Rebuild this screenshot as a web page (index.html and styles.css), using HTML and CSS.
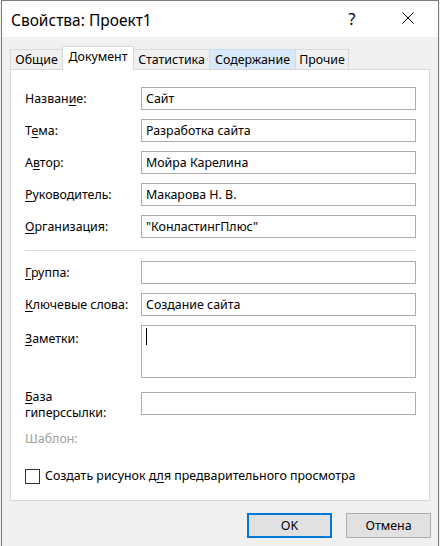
FILE: index.html
```html
<!DOCTYPE html>
<html lang="ru">
<head>
<meta charset="utf-8">
<title>Свойства: Проект1</title>
<link rel="stylesheet" href="styles.css">
</head>
<body>
<div class="window">
  <div class="titlebar">
    <span class="title">Свойства: Проект1</span>
    <span class="tb-btn help">?</span>
    <span class="tb-btn close">
      <svg width="12" height="12" viewBox="0 0 12 12"><path d="M0.5 0.5 L11.5 11.5 M11.5 0.5 L0.5 11.5" stroke="#000" stroke-width="1" fill="none"/></svg>
    </span>
  </div>
  <div class="content">
    <div class="tabs">
      <div class="tab t1">Общие</div>
      <div class="tab t2 active">Документ</div>
      <div class="tab t3">Статистика</div>
      <div class="tab t4 hover">Содержание</div>
      <div class="tab t5">Прочие</div>
    </div>
    <div class="panel">
      <div class="grid">
        <div class="lbl">Назван<u>и</u>е:</div><div class="field">Сайт</div>
        <div class="lbl">Т<u>е</u>ма:</div><div class="field">Разработка сайта</div>
        <div class="lbl">А<u>в</u>тор:</div><div class="field">Мойра Карелина</div>
        <div class="lbl"><u>Р</u>уководитель:</div><div class="field">Макарова Н. В.</div>
        <div class="lbl"><u>О</u>рганизация:</div><div class="field">"КонластингПлюс"</div>
      </div>
      <div class="sep"></div>
      <div class="grid">
        <div class="lbl"><u>Г</u>руппа:</div><div class="field"></div>
        <div class="lbl"><u>К</u>лючевые слова:</div><div class="field">Создание сайта</div>
        <div class="lbl top"><u>З</u>аметки:</div><div class="field notes"><span class="caret"></span></div>
        <div class="lbl base-lbl"><u>Б</u>аза<br>гиперссылки:</div><div class="field base-field"></div>
      </div>
      <div class="template">Шаблон:</div>
      <div class="check"><span class="box"></span><span>Создать рисунок д<u>л</u>я предварительного просмотра</span></div>
    </div>
    <div class="buttons">
      <div class="btn default">OK</div>
      <div class="btn">Отмена</div>
    </div>
  </div>
</div>
</body>
</html>
```
FILE: styles.css
```css
html, body {
  margin: 0;
  padding: 0;
  background: #f0f0f0;
}
body {
  font-family: "Noto Sans", "Liberation Sans", sans-serif;
  font-size: 12.4px;
  color: #000;
  overflow: hidden;
  height: 546px;
}
.window {
  box-sizing: border-box;
  margin-left: 1px;
  width: 438px;
  height: 560px;
  border: 1px solid #7a7a7a;
  border-bottom: none;
  background: #f0f0f0;
}
.titlebar {
  height: 36px;
  background: #fff;
  display: flex;
  align-items: center;
  padding-right: 7px;
}
.title {
  flex: 1;
  padding-left: 9px;
  font-size: 15.5px;
  line-height: 20px;
  margin-top: 2px;
}
.tb-btn {
  width: 46px;
  height: 36px;
  display: flex;
  align-items: center;
  justify-content: center;
}
.help {
  font-size: 16px;
  margin-right: 10px;
}
.close svg {
  display: block;
  margin-top: -2px;
}
.content {
  padding: 9px 8px 0 8px;
}
.tabs {
  display: flex;
  align-items: flex-end;
  height: 23px;
}
.tab {
  box-sizing: border-box;
  height: 20px;
  border: 1px solid #d9d9d9;
  border-bottom: none;
  margin-right: -1px;
  background: #f0f0f0;
  display: flex;
  align-items: center;
  justify-content: center;
  line-height: 16px;
  padding-top: 1px;
  white-space: nowrap;
}
.t1 { width: 53px; }
.t2 { width: 72px; }
.t3 { width: 77px; }
.t4 { width: 87px; }
.t5 { width: 54px; }
.tab.active {
  height: 24px;
  margin-bottom: -1px;
  background: #fff;
  position: relative;
  z-index: 1;
  padding-top: 0;
  padding-bottom: 4px;
}
.tab.hover {
  background: #d8eaf9;
  border-color: #c5def4;
  position: relative;
}
.panel {
  box-sizing: border-box;
  width: 420px;
  height: 432px;
  background: #fff;
  border: 1px solid #d9d9d9;
  padding: 17px 0 0 14px;
}
.grid {
  display: grid;
  grid-template-columns: 116px 275px;
  row-gap: 9px;
  align-items: center;
}
.lbl {
  line-height: 16px;
  white-space: nowrap;
}
.lbl u, .check u {
  text-underline-offset: 2px;
}
.lbl.top {
  align-self: start;
  margin-top: 6px;
}
.field {
  box-sizing: border-box;
  height: 23px;
  border: 1px solid #adadad;
  background: #fff;
  padding: 0 4px;
  line-height: 21px;
  white-space: nowrap;
  overflow: hidden;
}
.field.notes {
  height: 53px;
}
.caret {
  display: block;
  width: 1px;
  height: 17px;
  background: #000;
  margin-top: 2px;
}
.base-lbl {
  margin-top: 2px;
}
.base-field {
  align-self: start;
  margin-top: 5px;
}
.sep {
  width: 391px;
  height: 1px;
  background: #dcdcdc;
  margin: 12px 0 10px 0;
}
.template {
  color: #a0a0a0;
  line-height: 16px;
  margin-top: 10px;
}
.check {
  display: flex;
  align-items: center;
  margin-top: 21px;
  line-height: 16px;
}
.box {
  box-sizing: border-box;
  width: 15px;
  height: 15px;
  border: 1px solid #333;
  background: #fff;
  margin-right: 5px;
}
.buttons {
  display: flex;
  justify-content: flex-end;
  gap: 14px;
  margin-top: 12px;
  margin-right: -1px;
}
.btn {
  box-sizing: border-box;
  width: 85px;
  height: 25px;
  background: #e1e1e1;
  border: 1px solid #adadad;
  display: flex;
  align-items: center;
  justify-content: center;
}
.btn.default {
  border: 2px solid #0078d7;
}
```
